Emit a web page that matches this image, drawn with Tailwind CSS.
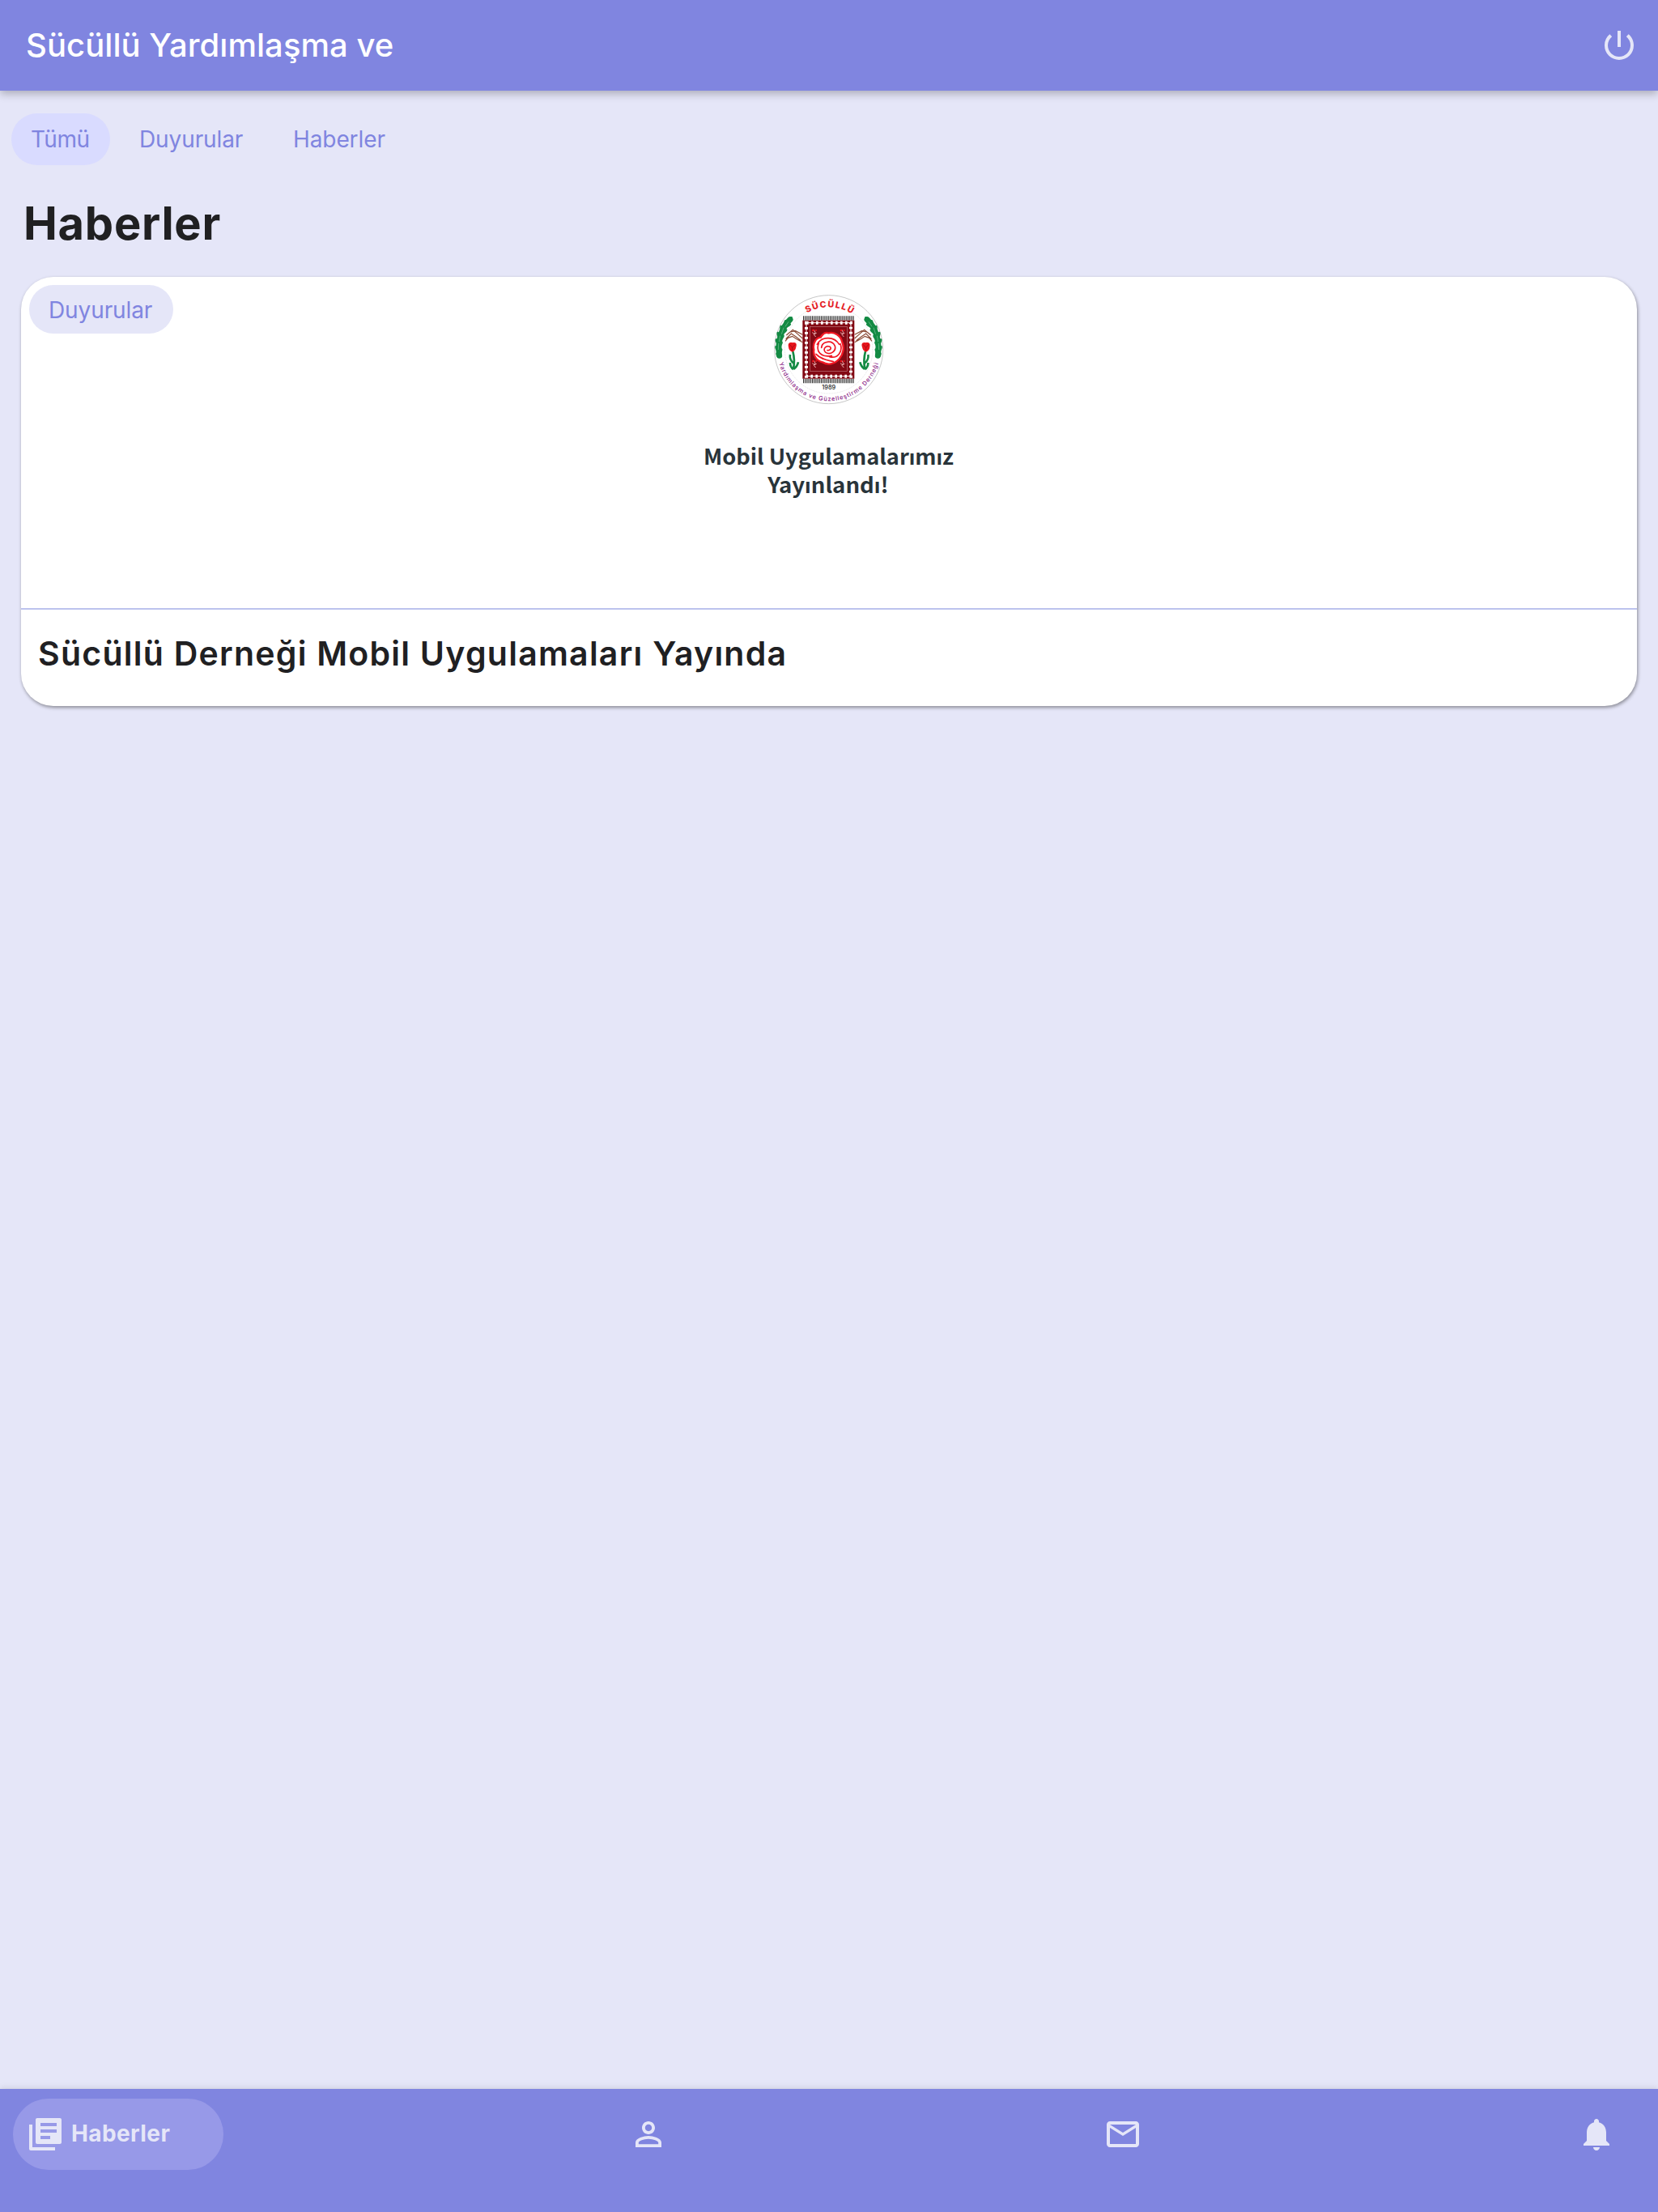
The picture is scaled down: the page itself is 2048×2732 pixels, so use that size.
<!DOCTYPE html>
<html lang="tr">
<head>
<meta charset="utf-8">
<title>Haberler</title>
<script src="https://cdn.jsdelivr.net/npm/@tailwindcss/browser@4"></script>
</head>
<body class="bg-[#e5e6f8] font-['Inter',sans-serif] text-[#202022]">
<div class="flex h-[2732px] w-[2048px] flex-col overflow-hidden">
  <header class="relative z-10 flex h-28 shrink-0 items-center justify-between bg-[#8085e0] pr-6 pl-8 shadow-[0_4px_10px_rgba(0,0,0,0.25)]">
    <h1 class="text-[40px] leading-[48px] font-medium tracking-[0.05px] whitespace-nowrap text-white">Sücüllü Yardımlaşma ve</h1>
    <svg class="size-12 fill-[#e5e6f8]" viewBox="0 0 24 24"><path d="M13 3h-2v10h2V3zm4.83 2.17l-1.42 1.42A6.92 6.92 0 0 1 19 12c0 3.87-3.13 7-7 7s-7-3.13-7-7c0-2.19 1.01-4.14 2.58-5.42L6.17 5.17A8.932 8.932 0 0 0 3 12a9 9 0 0 0 18 0c0-2.74-1.23-5.18-3.17-6.83z"/></svg>
  </header>

  <main class="flex grow flex-col">
    <nav class="mt-7 ml-3.5 flex h-16 text-[28px] leading-[64px] tracking-[-0.1px] text-[#8085e0]">
      <span class="w-[122px] rounded-full bg-[#d9dbff] pl-6 tracking-[-0.4px]">Tümü</span>
      <span class="w-[190px] pl-9">Duyurular</span>
      <span class="pl-9">Haberler</span>
    </nav>
    <h2 class="mt-[38px] ml-[29px] h-[68px] text-[56px] leading-[68px] font-bold tracking-[0.75px]">Haberler</h2>

    <article class="mt-8 ml-[26px] h-[530px] w-[1996px] rounded-[40px] bg-white shadow-[1px_2px_4px_rgba(0,0,0,0.4)]">
      <div class="relative flex h-[409px] flex-col items-center pt-2">
        <span class="absolute top-2.5 left-2.5 h-[60px] w-[178px] rounded-full bg-[#e5e6f8] pl-6 text-[28px] leading-[62px] tracking-[-0.1px] text-[#8085e0]">Duyurular</span>
        <svg class="h-[290px] w-[370px]" viewBox="0 0 1110 870">
          <defs>
            <path id="arcTop" d="M94 245A157 157 0 0 1 408 245"/>
            <path id="arcBottom" d="M60 245A191 191 0 0 0 442 245"/>
            <g id="wheat" fill="#138a43">
              <path d="M108 134C76 164 60 214 68 268" fill="none" stroke="#138a43" stroke-width="21" stroke-linecap="round"/>
              <ellipse cx="108" cy="133" rx="5" ry="12" transform="rotate(40 108 133)"/>
              <ellipse cx="90" cy="146" rx="5" ry="11" transform="rotate(5 90 146)"/>
              <ellipse cx="101" cy="156" rx="5" ry="12" transform="rotate(55 101 156)"/>
              <ellipse cx="75" cy="166" rx="5" ry="11" transform="rotate(-5 75 166)"/>
              <ellipse cx="88" cy="178" rx="5" ry="12" transform="rotate(45 88 178)"/>
              <ellipse cx="64" cy="190" rx="5" ry="11" transform="rotate(-12 64 190)"/>
              <ellipse cx="78" cy="201" rx="5" ry="12" transform="rotate(35 78 201)"/>
              <ellipse cx="59" cy="215" rx="5" ry="11" transform="rotate(-18 59 215)"/>
              <ellipse cx="73" cy="226" rx="5" ry="12" transform="rotate(28 73 226)"/>
              <ellipse cx="58" cy="241" rx="5" ry="11" transform="rotate(-20 58 241)"/>
              <ellipse cx="73" cy="251" rx="5" ry="11" transform="rotate(20 73 251)"/>
              <ellipse cx="61" cy="265" rx="5" ry="10" transform="rotate(-20 61 265)"/>
              <path d="M102 142L90 160M84 164L76 188M71 194L67 216M65 222L64 246" fill="none" stroke="#7cc49a" stroke-width="2"/>
            </g>
            <g id="tulip">
              <path d="M118 252C124 274 124 296 120 318M121 296C110 288 106 274 108 264M120 318C110 312 108 302 108 294M121 318C132 310 136 302 138 292" fill="none" stroke="#138a43" stroke-width="8"/>
              <path d="M102 236C98 218 110 218 118 220C130 216 134 226 130 236C128 246 124 250 116 254C108 250 103 246 102 236Z" fill="#e8141c"/>
              <path d="M106 226L116 238L127 226M116 238V250" fill="none" stroke="#8b0a12" stroke-width="2"/>
            </g>
            <g id="hills" fill="none" stroke="#8b4a35" stroke-width="3.5">
              <path d="M90 214L100 202L116 196L132 206L154 218M94 192L118 172L136 188L154 204M110 180L128 176L154 190M92 206L112 186L130 198L148 212"/>
            </g>
            <g id="sprig"><path d="M196 172L201 182L196 190L203 198M190 182L198 188L206 184" fill="none" stroke="#f0b6b6" stroke-width="3"/><circle cx="193" cy="174" r="4" fill="#e8141c"/><circle cx="204" cy="174" r="3" fill="#e8141c"/></g>
          </defs>
          <g transform="translate(303 0)">
            <circle cx="251" cy="245" r="201" fill="#fff" stroke="#a9a9a9" stroke-width="2"/>
            <circle cx="251" cy="245" r="163" fill="none" stroke="#c4c4c4" stroke-width="1.5" stroke-dasharray="3 3"/>
            <use href="#wheat"/><use href="#wheat" transform="translate(501 0) scale(-1 1)"/>
            <use href="#hills"/><use href="#hills" transform="translate(501 0) scale(-1 1)"/>
            <use href="#tulip"/><use href="#tulip" transform="translate(505 0) scale(-1 1)"/>
            <path d="M156 129H345M156 361H345" stroke="#333" stroke-width="17" stroke-dasharray="3 2.5"/>
            <rect x="154" y="137" width="192" height="216" fill="#830914"/>
            <rect x="168" y="146" width="165" height="198" fill="none" stroke="#fff" stroke-width="12" stroke-dasharray="8 10"/>
            <rect x="168" y="146" width="165" height="198" fill="none" stroke="#fff" stroke-width="3"/>
            <rect x="181" y="161" width="139" height="165" fill="#830914" stroke="#d69ba0" stroke-width="1.5"/>
            <use href="#sprig"/><use href="#sprig" x="104"/><use href="#sprig" y="114"/><use href="#sprig" x="104" y="114"/>
            <path d="M250 184C272 178 296 194 301 218C310 238 304 264 290 280C272 300 246 304 228 292C206 288 192 266 196 246C190 222 204 202 221 200C228 188 239 180 250 184Z" fill="#fff" stroke="#f01824" stroke-width="7"/>
            <g fill="none" stroke="#f01824" stroke-width="5" stroke-linecap="round">
              <path d="M208 226C226 194 272 196 290 226M214 222C202 252 222 276 262 268M294 224C304 250 286 280 254 272M224 238C226 214 264 208 274 232C280 252 256 266 240 256C228 246 238 228 254 234C264 240 256 250 246 248M204 262C222 282 246 284 268 290"/>
            </g>
            <text class="font-['Inter',sans-serif] text-[32px] font-extrabold tracking-[4px]" fill="#e51c24"><textPath href="#arcTop" startOffset="51%" text-anchor="middle">SÜCÜLLÜ</textPath></text>
            <text class="font-['Inter',sans-serif] text-[22px] font-medium tracking-[2.6px]" fill="#8a2185"><textPath href="#arcBottom" startOffset="50%" text-anchor="middle">Yardımlaşma ve Güzelleştirme Derneği</textPath></text>
            <text x="251" y="394" text-anchor="middle" class="font-['Inter',sans-serif] text-[22px] font-medium" fill="#222">1989</text>
          </g>
          <g class="font-['Noto_Sans_CJK_SC',sans-serif] text-[79px] font-bold" fill="#29343a">
            <text x="90" y="671" textLength="927" lengthAdjust="spacingAndGlyphs">Mobil Uygulamalarımız</text>
            <text x="328" y="777" textLength="448" lengthAdjust="spacingAndGlyphs">Yayınlandı!</text>
          </g>
        </svg>
      </div>
      <div class="h-0.5 bg-[#bcc3ee]"></div>
      <h3 class="pt-[30px] pl-[21px] text-[41px] leading-[48px] font-semibold tracking-[1.25px]">Sücüllü Derneği Mobil Uygulamaları Yayında</h3>
    </article>
  </main>

  <footer class="relative z-10 flex h-[152px] shrink-0 items-start bg-[#8085e0] pt-3 pl-4 shadow-[0_0_8px_rgba(0,0,0,0.15)]">
    <div class="flex h-22 w-[260px] items-center rounded-full bg-[#9799e8] pl-4 text-[#e5e6f8]">
      <svg class="size-12 fill-current" viewBox="0 0 24 24"><path d="M4 6H2v15c0 .55.45 1 1 1h15v-2H4V6zM21 2H7c-.55 0-1 .45-1 1v14c0 .55.45 1 1 1h14c.55 0 1-.45 1-1V3c0-.55-.45-1-1-1zm-2 9H9V9h10v2zm-4 4H9v-2h6v2zm4-8H9V5h10v2z"/></svg>
      <span class="ml-2 pb-0.5 text-[28px] leading-8 font-bold tracking-[0.4px]">Haberler</span>
    </div>
    <svg class="mt-5 ml-[501px] size-12 fill-[#e5e6f8]" viewBox="0 0 24 24"><path d="M12 5.9c1.16 0 2.1.94 2.1 2.1s-.94 2.1-2.1 2.1S9.9 9.16 9.9 8s.94-2.1 2.1-2.1m0 9c2.97 0 6.1 1.46 6.1 2.1v1.1H5.9V17c0-.64 3.13-2.1 6.1-2.1M12 4C9.79 4 8 5.79 8 8s1.79 4 4 4 4-1.79 4-4-1.79-4-4-4zm0 9c-2.67 0-8 1.34-8 4v3h16v-3c0-2.66-5.33-4-8-4z"/></svg>
    <svg class="mt-5 ml-[538px] size-12 fill-[#e5e6f8]" viewBox="0 0 24 24"><path d="M20 4H4c-1.1 0-2 .9-2 2v12c0 1.1.9 2 2 2h16c1.1 0 2-.9 2-2V6c0-1.1-.9-2-2-2zm0 14H4V8l8 5 8-5v10zm-8-7L4 6h16l-8 5z"/></svg>
    <svg class="mt-5 ml-[537px] size-12 fill-[#e5e6f8]" viewBox="0 0 24 24"><path d="M12 22c1.1 0 2-.9 2-2h-4c0 1.1.89 2 2 2zm6-6v-5c0-3.07-1.64-5.64-4.5-6.32V4c0-.83-.67-1.5-1.5-1.5s-1.5.67-1.5 1.5v.68C7.63 5.36 6 7.92 6 11v5l-2 2v1h16v-1l-2-2z"/></svg>
  </footer>
</div>
</body>
</html>
